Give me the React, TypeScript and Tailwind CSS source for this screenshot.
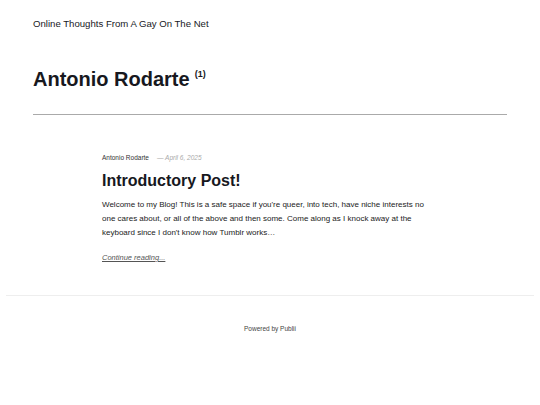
import React from "react";

export default function App() {
  const font = { fontFamily: '"Liberation Sans", Arial, sans-serif' };
  return (
    <div className="w-[540px] h-[405px] bg-white text-[#17181e] overflow-hidden" style={font}>
      <header className="px-[33px] pt-[18px]">
        <div className="text-[9.6px] leading-[12px] text-[#17181e]">Online Thoughts From A Gay On The Net</div>
      </header>
      <div className="mx-[33px] mt-[37px] pb-[23px] border-b border-[#aaaaaa]">
        <h1 className="text-[20px] leading-[24px] font-bold flex items-start">
          Antonio Rodarte
          <sup className="text-[9px] font-bold ml-[5px] top-[2px] relative leading-[10px]">(1)</sup>
        </h1>
      </div>
      <article className="w-[336px] mx-auto mt-[38px]">
        <div className="flex items-center text-[6.5px] leading-[9px]">
          <span className="text-[#333]">Antonio Rodarte</span>
          <span className="ml-[8px] text-[#aaa] italic">— April 6, 2025</span>
        </div>
        <h2 className="mt-[9px] text-[16px] leading-[20px] font-bold">Introductory Post!</h2>
        <p className="mt-[7px] text-[8px] leading-[14px] text-[#222]">
          Welcome to my Blog! This is a safe space if you're queer, into tech, have niche interests no one cares about, or all of the above and then some. Come along as I knock away at the keyboard since I don't know how Tumblr works…
        </p>
        <a className="block mt-[13px] text-[7.5px] leading-[10px] italic underline text-[#555]">Continue reading...</a>
      </article>
      <div className="mx-[6px] mt-[32px] border-t border-[#eeeeee]" />
      <footer className="mt-[29px] text-center text-[6.5px] leading-[8px] text-[#444]">Powered by Publii</footer>
    </div>
  );
}
